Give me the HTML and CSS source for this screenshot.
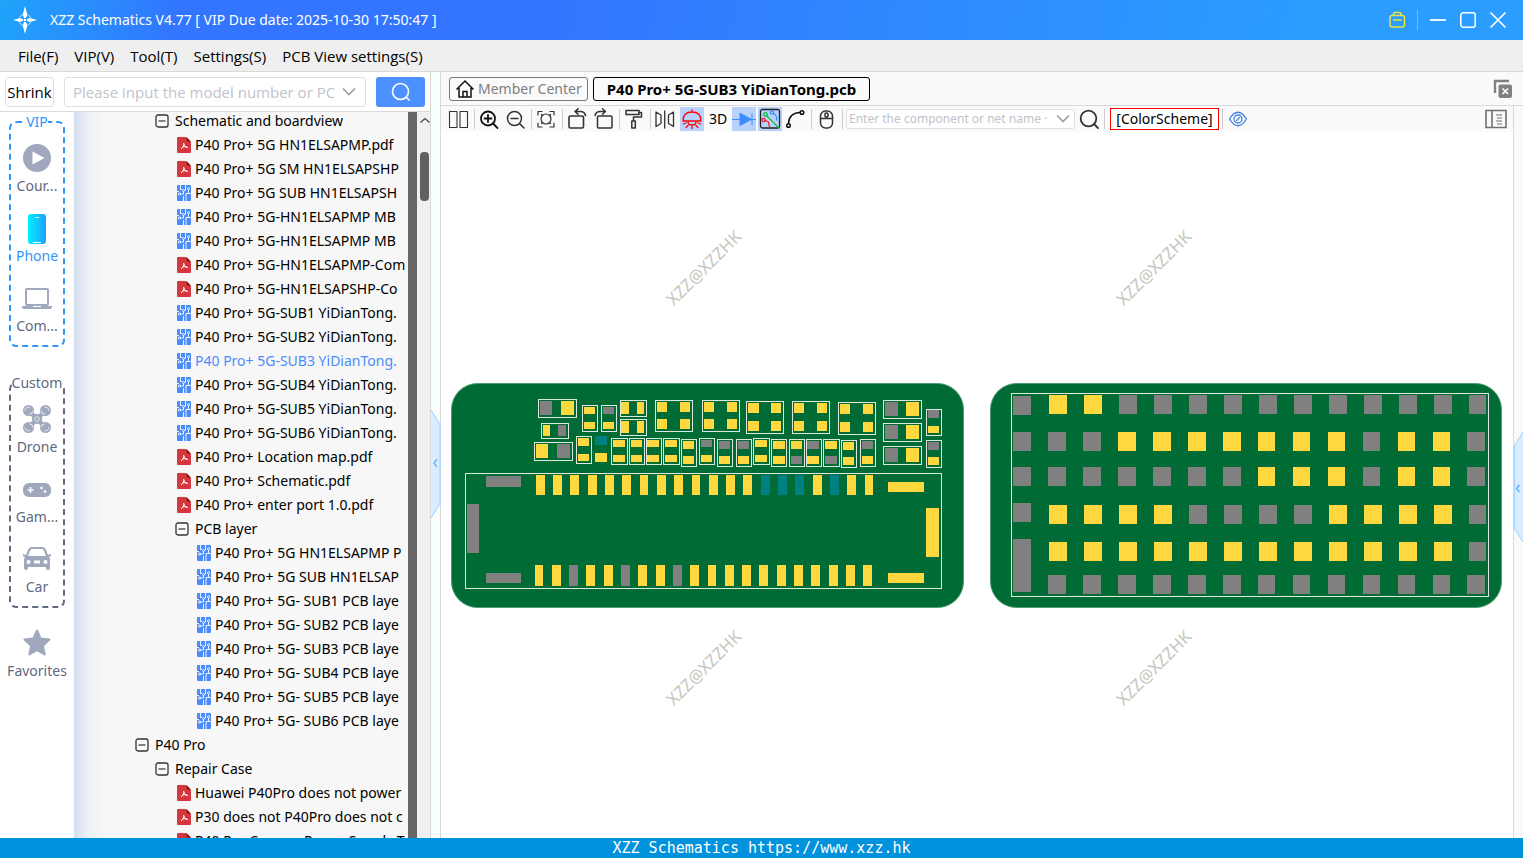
FILE: index.html
```html
<!DOCTYPE html>
<html lang="en">
<head>
<meta charset="utf-8">
<title>XZZ Schematics</title>
<link rel="stylesheet" href="styles.css">
</head>
<body>
<svg class="defs" aria-hidden="true">
  <symbol id="minus" viewBox="0 0 14 14"><rect x="1" y="1" width="12" height="12" rx="2" fill="#fafafa" stroke="#333" stroke-width="1.3"/><path d="M3.500 7h7" stroke="#333" stroke-width="1.200"/></symbol>
  <symbol id="pdf" viewBox="0 0 14 16"><path d="M1 0h8l5 5v10q0 1-1 1H1q-1 0-1-1V1q0-1 1-1z" fill="#d4373e"/><path d="M9.500 0L14 4.500h-3.500q-1 0-1-1z" fill="#8e1219"/><path d="M6.700 6c.6 2-.3 4-2.700 6M6.900 7c.3 2 1.600 3.200 4.100 3.600M5 10.500c1.500-.8 3-1 5-.6" fill="none" stroke="#fff" stroke-width="1"/></symbol>
  <symbol id="pcb" viewBox="0 0 14 16"><rect width="14" height="16" rx="1" fill="#4b8cfb"/><path d="M3.500 0v4.500H5M8.500 0v5.500M0 6.500h2M3 9h3.500V6.500M6.500 16v-5M9 16V8.500h2.500V4.500M14 8.500h-2.500" fill="none" stroke="#fff" stroke-width=".9"/><g fill="#4b8cfb" stroke="#fff" stroke-width=".9"><circle cx="2.500" cy="9" r="1.100"/><circle cx="6.500" cy="5.500" r="1"/><circle cx="11.500" cy="3.700" r="1.100"/></g></symbol>
  <symbol id="search" viewBox="0 0 20 20"><circle cx="9.500" cy="9.500" r="8"/><path d="M15 15l3.500 3.500"/></symbol>
  <symbol id="chevron" viewBox="0 0 14 14"><path d="M1 3.500l6 6 6-6" fill="none" stroke="#9a9fa8" stroke-width="1.600"/></symbol>
</svg>

<div class="app">
  <header class="titlebar">
    <svg class="logo" viewBox="0 0 24 28"><g fill="#fff"><path d="M12 0l2.300 8.500L13 12h-2L9.700 8.500zM12 28l2.300-8.500L13 16h-2l-1.300 3.500zM0 14l7-2 3 1.200v1.600L7 16zM24 14l-7-2-3 1.200v1.600l3 1.200z"/></g><circle cx="12" cy="14" r="6" fill="none" stroke="#bfe2ff" stroke-width="1" stroke-dasharray="5 4.400" stroke-dashoffset="-2"/><circle cx="12" cy="14" r="1.300" fill="#fff"/></svg>
    <h1 class="title">XZZ Schematics V4.77 [ VIP Due date: 2025-10-30 17:50:47 ]</h1>
    <div class="winbtns">
      <button class="wbtn" aria-label="Toolbox"><svg width="18" height="18" viewBox="0 0 18 18" fill="none" stroke="#e9e53a" stroke-width="1.500"><rect x="2" y="4.500" width="14.500" height="11.500" rx="2"/><path d="M5.500 4.500V3q0-1.500 1.500-1.500h4.500Q13 1.500 13 3v1.500M5 9h8.500"/></svg></button>
      <span class="wsep"></span>
      <button class="wbtn" aria-label="Minimize"><svg width="18" height="18" viewBox="0 0 18 18"><path d="M1 9h16" stroke="#fff" stroke-width="1.800"/></svg></button>
      <button class="wbtn" aria-label="Maximize"><svg width="18" height="18" viewBox="0 0 18 18"><rect x="1.800" y="1.800" width="14.400" height="14.400" rx="2.500" fill="none" stroke="#fff" stroke-width="1.500"/></svg></button>
      <button class="wbtn" aria-label="Close"><svg width="18" height="18" viewBox="0 0 18 18"><path d="M1.500 1.500l15 15M16.500 1.500l-15 15" stroke="#fff" stroke-width="1.600"/></svg></button>
    </div>
  </header>

  <nav class="menubar">
    <button>File(F)</button><button>VIP(V)</button><button>Tool(T)</button><button>Settings(S)</button><button>PCB View settings(S)</button>
  </nav>

  <div class="workspace">
    <aside class="left">
      <div class="searchrow">
        <button class="shrink">Shrink</button>
        <div class="combo">
          <input type="text" aria-label="Model number" placeholder="Please input the model number or PCB">
          <button class="drop" aria-label="Open list"><svg width="14" height="14"><use href="#chevron"/></svg></button>
        </div>
        <button class="go" aria-label="Search"><svg width="20" height="20" fill="none" stroke="#fff" stroke-width="1.600"><use href="#search"/></svg></button>
      </div>
      <div class="browser">
        <nav class="rail">
          <fieldset class="group vip">
            <legend>VIP</legend>
            <button class="cat"><svg viewBox="0 0 28 28"><circle cx="14" cy="14" r="14" fill="#9fa8bd"/><path d="M9.500 7.500v13l12-6.500z" fill="#fff"/></svg><span>Cour...</span></button>
            <button class="cat active"><svg viewBox="0 0 28 28"><defs><linearGradient id="ph"><stop offset="0" stop-color="#00f0ff"/><stop offset="1" stop-color="#1fa0ff"/></linearGradient></defs><rect x="5" y="0" width="18" height="30" rx="3" fill="url(#ph)"/><path d="M12 3.500h4M10 28.500h8" stroke="#fff" stroke-width="1"/></svg><span>Phone</span></button>
            <button class="cat"><svg viewBox="0 0 28 28"><rect x="3" y="5" width="22" height="16" rx="1" fill="none" stroke="#9fa8bd" stroke-width="2"/><path d="M-1 22h11v1h8v-1h11v1q0 2-2 2H1q-2 0-2-2z" fill="#9fa8bd"/></svg><span>Com...</span></button>
          </fieldset>
          <fieldset class="group custom">
            <legend>Custom</legend>
            <button class="cat"><svg viewBox="0 0 28 28"><g fill="#9fa8bd"><circle cx="5.500" cy="5.500" r="5.500"/><circle cx="22.500" cy="5.500" r="5.500"/><circle cx="5.500" cy="22.500" r="5.500"/><circle cx="22.500" cy="22.500" r="5.500"/><circle cx="14" cy="14" r="5"/></g><path d="M5.500 5.500l17 17M22.500 5.500l-17 17" stroke="#9fa8bd" stroke-width="4.500"/><g fill="none" stroke="#fff" stroke-width=".7"><circle cx="14" cy="14" r="2.300"/><path d="M2 6a3.500 3.500 0 0 1 5-3.500M26 6a3.500 3.500 0 0 0-5-3.500M2 22a3.500 3.500 0 0 0 5 3.500M26 22a3.500 3.500 0 0 1-5 3.500M6 9l3-.5.500-3M22 9l-3-.5-.5-3M6 19l3 .5.500 3M22 19l-3 .5-.5 3"/></g></svg><span>Drone</span></button>
            <button class="cat"><svg viewBox="0 0 28 28"><rect x="0" y="8" width="28" height="14" rx="6" fill="#9fa8bd"/><path d="M4.500 15h6M7.500 12v6" stroke="#fff" stroke-width="1.500"/><circle cx="18.500" cy="13" r="1.300" fill="#fff"/><circle cx="22" cy="16.500" r="1.300" fill="#fff"/></svg><span>Gam...</span></button>
            <button class="cat"><svg viewBox="0 0 28 28"><path fill-rule="evenodd" fill="#9fa8bd" d="M5 5q1-3 4-3h10q3 0 4 3l2 5 3-1v2l-2 1 1 2v9q0 2-2 2t-2-2v-1H5v1q0 2-2 2t-2-2v-9l1-2-2-1V9l3 1zm2 1l-2 5h18l-2-5q-.5-2-2-2H9Q7.500 4 7 6zm-1.500 9a2 2 0 1 0 .1 0zm17 0a2 2 0 1 0 .1 0zM11 15.500h6v3h-6z"/></svg><span>Car</span></button>
          </fieldset>
          <button class="cat fav"><svg viewBox="0 0 28 28"><path d="M14 1.500l3.600 8 8.900 1-6.600 6.200 1.800 8.800L14 21.200l-7.700 4.300 1.800-8.800L1.500 10.500l8.900-1z" fill="#9fa8bd" stroke="#9fa8bd" stroke-width="2" stroke-linejoin="round"/></svg><span>Favorites</span></button>
        </nav>
        <ul class="tree">
          <li class="l2"><svg class="tg"><use href="#minus"/></svg>Schematic and boardview</li>
          <li class="l3"><svg class="fi"><use href="#pdf"/></svg>P40 Pro+ 5G HN1ELSAPMP.pdf</li>
          <li class="l3"><svg class="fi"><use href="#pdf"/></svg>P40 Pro+ 5G SM HN1ELSAPSHP</li>
          <li class="l3"><svg class="fi"><use href="#pcb"/></svg>P40 Pro+ 5G SUB HN1ELSAPSH</li>
          <li class="l3"><svg class="fi"><use href="#pcb"/></svg>P40 Pro+ 5G-HN1ELSAPMP MB</li>
          <li class="l3"><svg class="fi"><use href="#pcb"/></svg>P40 Pro+ 5G-HN1ELSAPMP MB</li>
          <li class="l3"><svg class="fi"><use href="#pdf"/></svg>P40 Pro+ 5G-HN1ELSAPMP-Com</li>
          <li class="l3"><svg class="fi"><use href="#pdf"/></svg>P40 Pro+ 5G-HN1ELSAPSHP-Co</li>
          <li class="l3"><svg class="fi"><use href="#pcb"/></svg>P40 Pro+ 5G-SUB1 YiDianTong.</li>
          <li class="l3"><svg class="fi"><use href="#pcb"/></svg>P40 Pro+ 5G-SUB2 YiDianTong.</li>
          <li class="l3 selected"><svg class="fi"><use href="#pcb"/></svg>P40 Pro+ 5G-SUB3 YiDianTong.</li>
          <li class="l3"><svg class="fi"><use href="#pcb"/></svg>P40 Pro+ 5G-SUB4 YiDianTong.</li>
          <li class="l3"><svg class="fi"><use href="#pcb"/></svg>P40 Pro+ 5G-SUB5 YiDianTong.</li>
          <li class="l3"><svg class="fi"><use href="#pcb"/></svg>P40 Pro+ 5G-SUB6 YiDianTong.</li>
          <li class="l3"><svg class="fi"><use href="#pdf"/></svg>P40 Pro+ Location map.pdf</li>
          <li class="l3"><svg class="fi"><use href="#pdf"/></svg>P40 Pro+ Schematic.pdf</li>
          <li class="l3"><svg class="fi"><use href="#pdf"/></svg>P40 Pro+ enter port 1.0.pdf</li>
          <li class="l3"><svg class="tg"><use href="#minus"/></svg>PCB layer</li>
          <li class="l4"><svg class="fi"><use href="#pcb"/></svg>P40 Pro+ 5G HN1ELSAPMP P</li>
          <li class="l4"><svg class="fi"><use href="#pcb"/></svg>P40 Pro+ 5G SUB HN1ELSAP</li>
          <li class="l4"><svg class="fi"><use href="#pcb"/></svg>P40 Pro+ 5G- SUB1 PCB laye</li>
          <li class="l4"><svg class="fi"><use href="#pcb"/></svg>P40 Pro+ 5G- SUB2 PCB laye</li>
          <li class="l4"><svg class="fi"><use href="#pcb"/></svg>P40 Pro+ 5G- SUB3 PCB laye</li>
          <li class="l4"><svg class="fi"><use href="#pcb"/></svg>P40 Pro+ 5G- SUB4 PCB laye</li>
          <li class="l4"><svg class="fi"><use href="#pcb"/></svg>P40 Pro+ 5G- SUB5 PCB laye</li>
          <li class="l4"><svg class="fi"><use href="#pcb"/></svg>P40 Pro+ 5G- SUB6 PCB laye</li>
          <li class="l1"><svg class="tg"><use href="#minus"/></svg>P40 Pro</li>
          <li class="l2"><svg class="tg"><use href="#minus"/></svg>Repair Case</li>
          <li class="l3"><svg class="fi"><use href="#pdf"/></svg>Huawei P40Pro does not power</li>
          <li class="l3"><svg class="fi"><use href="#pdf"/></svg>P30 does not P40Pro does not c</li>
          <li class="l3"><svg class="fi"><use href="#pdf"/></svg>P40 Pro Camera Power Supply T</li>
        </ul>
        <div class="gutter"></div>
        <div class="scroll">
          <svg width="13" height="16" viewBox="0 0 13 16"><path d="M2.500 10.500l4.500-4 4.500 4" fill="none" stroke="#444" stroke-width="1.200"/></svg>
          <div class="thumb"></div>
        </div>
      </div>
    </aside>

    <div class="splitter"><button class="handle" aria-label="Collapse left panel"><svg width="10" height="110" viewBox="0 0 10 110"><path d="M0 1l9 14v80l-9 14z" fill="#d9ebff"/><path d="M0 1l9 14v80l-9 14" fill="none" stroke="#9fd3ff"/><path d="M6 50l-3 4 3 4" fill="none" stroke="#58a8ee" stroke-width="1.200"/></svg></button></div>

    <main class="right">
      <div class="tabs">
        <button class="tab"><svg width="20" height="20" viewBox="0 0 20 20" fill="none" stroke="#111" stroke-width="1.500"><path d="M1.500 10.500L10 2l8.500 8.500M4 9v9h12V9M8 18v-5.500h4V18"/></svg>Member Center</button>
        <button class="tab current">P40 Pro+ 5G-SUB3 YiDianTong.pcb</button>
        <button class="closeall" aria-label="Close all"><svg width="20" height="20" viewBox="0 0 20 20"><path d="M2 14V2h14" fill="none" stroke="#808080" stroke-width="2.400"/><rect x="5.500" y="5.500" width="13.500" height="13.500" rx="2" fill="#808080"/><path d="M9.500 9.500l5.500 5.500M15 9.500L9.500 15" stroke="#fff" stroke-width="1.600"/></svg></button>
      </div>
      <div class="lower">
        <div class="view">
          <div class="toolbar">
            <button class="tool" aria-label="Split view"><svg viewBox="0 0 24 24" stroke-width="1.100"><path d="M2.500 4.500h7.500v16H2.500zM13 4.500h7.500v16H13z"/></svg></button>
            <i></i>
            <button class="tool" aria-label="Zoom in"><svg viewBox="0 0 24 24" stroke="#111" stroke-width="1.800"><circle cx="10" cy="11.500" r="7"/><path d="M15 16.500l4.500 4.500M6.500 11.500h7M10 8v7"/></svg></button>
            <button class="tool" aria-label="Zoom out"><svg viewBox="0 0 24 24"><circle cx="10.500" cy="11.500" r="7"/><path d="M15.500 16.500l4.500 4.500M7 11.500h7"/></svg></button>
            <i></i>
            <button class="tool" aria-label="Fit"><svg viewBox="0 0 24 24" stroke-width="1.200"><circle cx="11" cy="12" r="5"/><path d="M3 8V4.500h4M15 4.500h4V8M3 16v4h4M15 20h4v-4M6.500 7.500l1 1M15.500 7.500l-1 1M6.500 16.500l1-1M15.500 16.500l-1-1"/></svg></button>
            <i></i>
            <button class="tool" aria-label="Rotate left"><svg viewBox="0 0 24 24" stroke-width="1.600"><rect x="3" y="9" width="14.500" height="12" rx="1.500"/><path d="M9.500 4.500h5q4 0 5 4M12 1.800L9 4.500l3 2.700"/></svg></button>
            <button class="tool" aria-label="Rotate right"><svg viewBox="0 0 24 24" stroke-width="1.500"><rect x="5.500" y="9" width="14.500" height="12" rx="1"/><path d="M3 8.500q1-4 5-4h5M10.500 1.800l3 2.700-3 2.700"/></svg></button>
            <i></i>
            <button class="tool" aria-label="Paint"><svg viewBox="0 0 24 24" stroke-width="1.500"><rect x="3" y="3.500" width="13" height="4"/><path d="M16 5.500h2.500V10h-8v4M8.800 14h3.500v7H8.800z"/></svg></button>
            <i></i>
            <button class="tool" aria-label="Mirror"><svg viewBox="0 0 24 24" stroke-width="1.300"><path d="M2 5v14.500l5-3V8zM19.500 5v14.500l-5-3V8zM10.700 4v17"/></svg></button>
            <button class="tool on" aria-label="Lamp"><svg viewBox="0 0 24 24" stroke="#f00" stroke-width="1.300"><path d="M3 14q0-9 9-9t9 9zM12 3v2M8 15q0 3 4 3t4-3M3.500 17l2.500-1M20.500 17L18 16M6 20.500l2-2M18 20.500l-2-2M12 19.500v2"/></svg></button>
            <button class="tool">3D</button>
            <button class="tool on" aria-label="Diode"><svg viewBox="0 0 24 24" stroke="#3c8bff" stroke-width="1"><path d="M0 12.500h24M20 7v11"/><path d="M8 6.500v12l11-6z" fill="#3c8bff"/></svg></button>
            <button class="tool on" aria-label="Traces"><svg viewBox="0 0 24 24" stroke-width="1.300"><rect x="2.500" y="2.500" width="19" height="18.500" rx="2" stroke="#222"/><path d="M9 9l12 12" stroke="#10c030"/><circle cx="7.500" cy="7.500" r="1.800" stroke="#10c030"/><circle cx="14" cy="5.500" r="1.600" stroke="#3c8bff"/><path d="M15.500 6.500q4 2 3 6.500" stroke="#3c8bff"/><circle cx="5.500" cy="13" r="1.600" stroke="#f02030"/><path d="M7 13.500l3.500 1.500 1 5" stroke="#f02030"/></svg></button>
            <button class="tool" aria-label="Net"><svg viewBox="0 0 24 24" stroke="#111"><circle cx="4.500" cy="18.500" r="1.800"/><circle cx="18" cy="5.500" r="1.800"/><path d="M4.500 16.500Q5 6 16 5.500"/></svg></button>
            <i></i>
            <button class="tool" aria-label="Mouse"><svg viewBox="0 0 24 24"><rect x="5.500" y="4" width="12" height="17" rx="5"/><path d="M5.500 11.500h12M11.500 10v1.500"/><rect x="10" y="6" width="3" height="4" rx="1"/></svg></button>
            <i></i>
            <div class="combo small">
              <input type="text" aria-label="Component or net name" placeholder="Enter the component or net name ·">
              <button class="drop" aria-label="Open list"><svg width="14" height="14"><use href="#chevron"/></svg></button>
            </div>
            <button class="tool" aria-label="Find"><svg viewBox="0 0 24 24" stroke-width="1.800"><circle cx="11.500" cy="11.500" r="7.800"/><path d="M17 17l4 4"/></svg></button>
            <i></i>
            <button class="scheme">[ColorScheme]</button>
            <i></i>
            <button class="tool" aria-label="Visibility"><svg viewBox="0 0 24 24" stroke="#3f7fe0" stroke-width="1.300"><path d="M3.500 12Q12-1.500 20.500 12 12 25.500 3.500 12z"/><circle cx="12" cy="12" r="4"/><path d="M10.500 13.500l3-3"/></svg></button>
            <button class="panelbtn" aria-label="Side panel"><svg width="22" height="20" viewBox="0 0 22 20" fill="none" stroke="#707070" stroke-width="1.600"><path d="M1 1.500h20v17H1zM7 1.500v17"/><path d="M11 6h6M12 9h5M11 12h6M12 15h5" stroke-width="1.200"/></svg></button>
          </div>
          <svg class="board" viewBox="441 132 1072 706" role="img" aria-label="PCB board view">
            <g class="mark">
              <text transform="translate(704 268) rotate(-45)" dy="6">XZZ@XZZHK</text>
              <text transform="translate(1154 268) rotate(-45)" dy="6">XZZ@XZZHK</text>
              <text transform="translate(704 668) rotate(-45)" dy="6">XZZ@XZZHK</text>
              <text transform="translate(1154 668) rotate(-45)" dy="6">XZZ@XZZHK</text>
            </g>
            <g class="pcb" transform="translate(.5 .5)">
              <rect x="451" y="383" width="512" height="224" rx="26"/>
              <rect x="990" y="383" width="511" height="224" rx="26"/>
            </g>
            <g class="crisp">
              <path class="outline" transform="translate(.5 .5)" d="M538 399h38v18h-38zM541 423h27v15h-27zM534 442h38v18h-38zM582 405h15v26h-15zM601 405h15v26h-15zM620 400h26v16h-26zM620 419h26v16h-26zM655 400h37v31h-37zM702 400h37v31h-37zM746 401h37v32h-37zM792 401h37v32h-37zM838 402h37v32h-37zM883 400h38v18h-38zM883 423h38v18h-38zM883 446h38v18h-38zM926 409h15v26h-15zM926 440h15v27h-15zM576 436h15v27h-15zM611 438h16v26h-16zM629 438h15v26h-15zM646 438h15v26h-15zM663 438h16v26h-16zM681 439h15v27h-15zM699 438h15v26h-15zM717 439h15v27h-15zM736 439h15v27h-15zM753 438h16v26h-16zM771 439h15v27h-15zM789 439h15v27h-15zM806 439h15v27h-15zM823 439h16v27h-16zM841 440h15v27h-15zM860 439h15v27h-15zM465 473h476v115h-476zM1011 393h477v203h-477z"/>
              <path class="gold" d="M561 401h13v14h-13zM543 425h7v11h-7zM536 444h12v14h-12zM584 407h11v7h-11zM584 422h11v7h-11zM603 422h11v7h-11zM621 402h8v12h-8zM637 402h7v12h-7zM621 421h8v12h-8zM637 421h7v12h-7zM657 402h10v10h-10zM680 402h10v10h-10zM657 419h10v10h-10zM680 419h10v10h-10zM704 402h10v10h-10zM727 402h10v10h-10zM704 419h10v10h-10zM727 419h10v10h-10zM748 403h11v10h-11zM771 403h10v10h-10zM748 421h11v10h-11zM771 421h10v10h-10zM794 403h10v10h-10zM817 403h10v10h-10zM794 421h10v10h-10zM817 421h10v10h-10zM840 404h10v10h-10zM863 404h10v10h-10zM840 422h10v10h-10zM863 422h10v10h-10zM906 402h13v14h-13zM906 425h13v14h-13zM906 448h13v14h-13zM928 426h11v7h-11zM928 457h11v8h-11z"/>
              <path class="gold" d="M578 438h11v8h-11zM578 454h11v7h-11zM595 453h12v9h-12zM613 440h12v7h-12zM613 455h12v7h-12zM631 440h11v7h-11zM631 455h11v7h-11zM647 440h12v7h-12zM647 455h12v7h-12zM665 440h12v7h-12zM665 455h12v7h-12zM683 441h11v8h-11zM683 456h11v8h-11zM701 455h11v7h-11zM719 456h11v8h-11zM738 456h11v8h-11zM755 440h12v7h-12zM755 455h12v7h-12zM773 441h12v8h-12zM773 456h12v8h-12zM791 441h11v8h-11zM807 456h12v8h-12zM825 441h12v8h-12zM843 442h11v8h-11zM843 457h11v8h-11zM862 456h11v8h-11z"/>
              <path class="gold" d="M536 475h9v20h-9zM553 475h9v20h-9zM570 475h9v20h-9zM588 475h9v20h-9zM605 475h9v20h-9zM622 475h9v20h-9zM640 475h8v20h-8zM657 475h9v20h-9zM674 475h9v20h-9zM692 475h8v20h-8zM709 475h9v20h-9zM726 475h9v20h-9zM743 475h9v20h-9zM813 475h9v20h-9zM847 475h9v20h-9zM865 475h8v20h-8zM535 565h8v21h-8zM552 565h9v21h-9zM586 565h9v21h-9zM604 565h9v21h-9zM638 565h9v21h-9zM656 565h9v21h-9zM690 565h9v21h-9zM708 565h8v21h-8zM725 565h9v21h-9zM742 565h9v21h-9zM759 565h9v21h-9zM777 565h9v21h-9zM794 565h9v21h-9zM811 565h9v21h-9zM829 565h9v21h-9zM846 565h9v21h-9zM863 565h9v21h-9zM888 482h36v10h-36zM888 573h36v10h-36zM926 508h13v49h-13z"/>
              <path class="teal" d="M595 436h12v9h-12zM761 475h9v20h-9zM778 475h9v20h-9zM795 475h9v20h-9zM830 475h9v20h-9z"/>
              <path class="gray" d="M540 401h12v14h-12zM558 425h8v11h-8zM557 444h13v14h-13zM603 407h11v7h-11zM885 402h13v14h-13zM885 425h13v14h-13zM885 448h13v14h-13zM928 410h11v8h-11zM928 442h11v8h-11zM701 440h11v7h-11zM719 441h11v8h-11zM738 441h11v8h-11zM791 456h11v8h-11zM807 441h12v8h-12zM825 456h12v8h-12zM862 441h11v8h-11zM569 565h9v21h-9zM621 565h9v21h-9zM673 565h9v21h-9zM486 476h35v11h-35zM486 573h35v10h-35zM467 504h12v49h-12z"/>
              <path class="gold" d="M1049 395h18v19h-18zM1084 395h18v19h-18zM1118 432h18v19h-18zM1153 432h18v19h-18zM1188 432h18v19h-18zM1223 432h18v19h-18zM1258 432h17v19h-17zM1293 432h17v19h-17zM1328 432h17v19h-17zM1398 432h17v19h-17zM1433 432h17v19h-17zM1258 467h17v19h-17zM1293 467h17v19h-17zM1328 467h17v19h-17zM1398 467h17v19h-17zM1433 467h17v19h-17zM1049 505h18v19h-18zM1084 505h18v19h-18zM1119 505h18v19h-18zM1154 505h18v19h-18zM1329 505h18v19h-18zM1364 505h18v19h-18zM1399 505h18v19h-18zM1434 505h18v19h-18zM1049 542h18v19h-18zM1084 542h18v19h-18zM1119 542h18v19h-18zM1154 542h18v19h-18zM1189 542h18v19h-18zM1224 542h18v19h-18zM1259 542h18v19h-18zM1294 542h18v19h-18zM1329 542h18v19h-18zM1364 542h18v19h-18zM1399 542h18v19h-18zM1434 542h18v19h-18z"/>
              <path class="gray" d="M1013 396h18v19h-18zM1119 395h18v19h-18zM1154 395h18v19h-18zM1189 395h18v19h-18zM1224 395h18v19h-18zM1259 395h18v19h-18zM1294 395h18v19h-18zM1329 395h18v19h-18zM1364 395h18v19h-18zM1399 395h18v19h-18zM1434 395h18v19h-18zM1469 395h17v19h-17zM1013 432h18v19h-18zM1048 432h18v19h-18zM1083 432h18v19h-18zM1363 432h17v19h-17zM1467 432h18v19h-18zM1013 467h18v19h-18zM1048 467h18v19h-18zM1083 467h18v19h-18zM1118 467h18v19h-18zM1153 467h18v19h-18zM1188 467h18v19h-18zM1223 467h18v19h-18zM1363 467h17v19h-17zM1467 467h18v19h-18zM1013 503h18v19h-18zM1189 505h18v19h-18zM1224 505h18v19h-18zM1259 505h18v19h-18zM1294 505h18v19h-18zM1469 505h17v19h-17zM1013 539h18v53h-18zM1469 542h17v19h-17zM1048 575h18v19h-18zM1083 575h18v19h-18zM1118 575h18v19h-18zM1153 575h18v19h-18zM1188 575h18v19h-18zM1223 575h18v19h-18zM1258 575h17v19h-17zM1293 575h17v19h-17zM1328 575h17v19h-17zM1363 575h17v19h-17zM1398 575h17v19h-17zM1433 575h17v19h-17zM1467 575h18v19h-18z"/>
            </g>
          </svg>
        </div>
        <div class="edge"><button class="handle" aria-label="Expand right panel"><svg width="10" height="112" viewBox="0 0 10 112"><path d="M9 1L.5 14v84L9 111z" fill="#d9ebff"/><path d="M9 1L.5 14v84L9 111" fill="none" stroke="#9fd3ff"/><path d="M5.500 54l-3 3.500 3 3.500" fill="none" stroke="#58a8ee" stroke-width="1.200"/></svg></button></div>
      </div>
    </main>
  </div>

  <footer class="status">XZZ Schematics https://www.xzz.hk</footer>
</div>
</body>
</html>
```
FILE: styles.css
```css
* { box-sizing: border-box; }
body { margin: 0; font: 14px/20px "Noto Sans", "Open Sans", sans-serif; color: #000; }
button, input { font: inherit; color: inherit; }
button { border: 0; padding: 0; background: none; }
button svg { display: block; flex: none; }
.defs { display: none; }
.app { display: flex; flex-direction: column; height: 100vh; overflow: hidden; background: #fff; }
.menubar, .searchrow { font-family: "Open Sans", "Noto Sans", sans-serif; font-size: 15px; }

.titlebar { display: flex; align-items: center; flex: none; height: 40px; padding: 0 16px 0 13px; color: #fff; background: linear-gradient(100deg, #1fa4fa 0, #3375ff 12%, #3375ff 35%, #2b9dff 85%, #2b9dff 100%); }
.logo { width: 24px; height: 28px; margin-right: 13px; }
.title { margin: 0; font-size: 14px; font-weight: 400; }
.winbtns { display: flex; align-items: center; gap: 12px; margin-left: auto; }
.wsep { width: 1px; height: 20px; margin: 0 -1px; background: #6fbcff; }
.wbtn { width: 18px; height: 18px; }

.menubar { display: flex; align-items: center; flex: none; gap: 16px; height: 32px; padding: 0 18px; background: #efefef; border-bottom: 1px solid #d9d9d9; }

.workspace { display: flex; flex: 1; min-height: 0; }
.left { display: flex; flex-direction: column; flex: none; width: 430px; }
.searchrow { display: flex; align-items: center; flex: none; height: 40px; padding: 0 5px; border-bottom: 1px solid #d9d9d9; }
.shrink { width: 49px; height: 30px; margin-right: 10px; border: 1px solid #dcdfe6; border-radius: 3px; background: #fff; }
.combo { display: flex; align-items: center; flex: 1; min-width: 0; height: 30px; padding: 0 9px 0 8px; border: 1px solid #dcdfe6; border-radius: 3px; background: #fff; }
.combo input { flex: 1; min-width: 0; border: 0; padding: 0; outline: 0; background: none; }
.combo input::placeholder { color: #bfc3cb; opacity: 1; }
.drop { margin-left: 6px; }
.go { display: flex; align-items: center; justify-content: center; width: 49px; height: 30px; margin-left: 10px; border-radius: 3px; background: #4d90ff; }

.browser { display: flex; flex: 1; min-height: 0; }
.rail { flex: none; width: 74px; background: #fff; color: #606a80; }
.group { min-width: 0; margin: 0 9px; padding: 0 0 3px; border: 2px dashed #3295fa; border-radius: 7px; }
.group legend { margin: 0 auto; padding: 0; }
.vip legend, .active { color: #3295fa; }
.custom { margin-top: 26px; border-color: #606a80; }
.cat { display: flex; flex-direction: column; align-items: center; gap: 4px; width: 100%; height: 70px; padding-top: 12px; }
.cat svg { width: 28px; height: 28px; overflow: visible; }
.fav { margin-top: 9px; }

.tree { flex: 1; min-width: 0; margin: 0; padding: 0; overflow: hidden; list-style: none; background: linear-gradient(90deg, #d3def0 0, #eef1f6 14px, #f7f7f7 32px); border-right: 2px solid #f7f7f7; }
.tree li { display: flex; align-items: center; height: 24px; white-space: nowrap; }
.tree li:first-child { margin-top: -3px; }
.tree .l1 { padding-left: 61px; }
.tree .l2 { padding-left: 81px; }
.tree .l3 { padding-left: 101px; }
.tree .l4 { padding-left: 121px; }
.tree .selected { color: #4b8cfb; }
.tg, .fi { flex: none; width: 14px; }
.tg { height: 14px; margin-right: 6px; }
.fi { height: 16px; margin: 0 4px 0 2px; }
.gutter { flex: none; width: 9px; background: #666; }
.scroll { display: flex; flex-direction: column; align-items: center; flex: none; width: 13px; gap: 24px; padding-left: 2px; background: #f0f0f0; }
.thumb { width: 9px; height: 49px; border-radius: 4px; background: #606060; }

.splitter { display: flex; align-items: center; flex: none; width: 11px; padding-top: 18px; border: solid #d9d9d9; border-width: 0 1px; background: #f9fff9; }

.right { display: flex; flex-direction: column; flex: 1; min-width: 0; }
.tabs { display: flex; align-items: center; flex: none; gap: 5px; height: 34px; padding: 0 10px 0 8px; background: #fafafa; border-bottom: 1px solid #d9d9d9; }
.tab { display: flex; align-items: center; gap: 3px; height: 24px; padding: 0 5px; border: 1px solid #777; border-radius: 3px; color: #808080; }
.tab.current { padding: 0 13px; border-color: #000; color: #000; font-size: 15px; font-weight: 700; }
.closeall { margin-left: auto; }
.lower { display: flex; flex: 1; min-height: 0; }
.view { display: flex; flex-direction: column; flex: 1; min-width: 0; }
.toolbar { display: flex; align-items: center; flex: none; gap: 2px; height: 26px; padding: 0 6px; background: #fafafa; }
.toolbar i { width: 1px; height: 20px; margin: 0 1px; background: #ccc; }
.tool { flex: none; width: 24px; height: 24px; }
.tool svg { width: 24px; height: 24px; fill: none; stroke-linejoin: round; stroke-linecap: round; }
.tool svg:not([stroke]) { stroke: #333; }
.tool svg:not([stroke-width]) { stroke-width: 1.5px; }
.tool.on { background: #b9d2fb; }
.combo.small { flex: 0 1 229px; height: 20px; padding: 0 4px 0 2px; font: 12px/18px "Noto Sans", "Open Sans", sans-serif; }
.combo.small .drop { margin-left: 2px; }
.scheme { width: 109px; height: 22px; margin-left: 2px; border: 1px solid #f00; background: #fff; }
.panelbtn { margin-left: auto; }
.board { flex: 1; width: 100%; min-height: 0; }
.mark { fill: #c8c6be; font-size: 17px; text-anchor: middle; }
.pcb { fill: #006b34; stroke: #4f9a72; }
.crisp { shape-rendering: crispEdges; }
.outline { fill: none; stroke: #dbe9df; }
.gold { fill: #ffd840; }
.gray { fill: #808080; }
.teal { fill: #008080; }
.edge { display: flex; align-items: center; flex: none; width: 10px; padding-top: 30px; border-left: 1px solid #d9d9d9; background: #fafafa; }

.status { flex: none; height: 20px; background: #0092dc; color: #fff; font: 15px/20px "DejaVu Sans Mono", monospace; text-align: center; }
```
